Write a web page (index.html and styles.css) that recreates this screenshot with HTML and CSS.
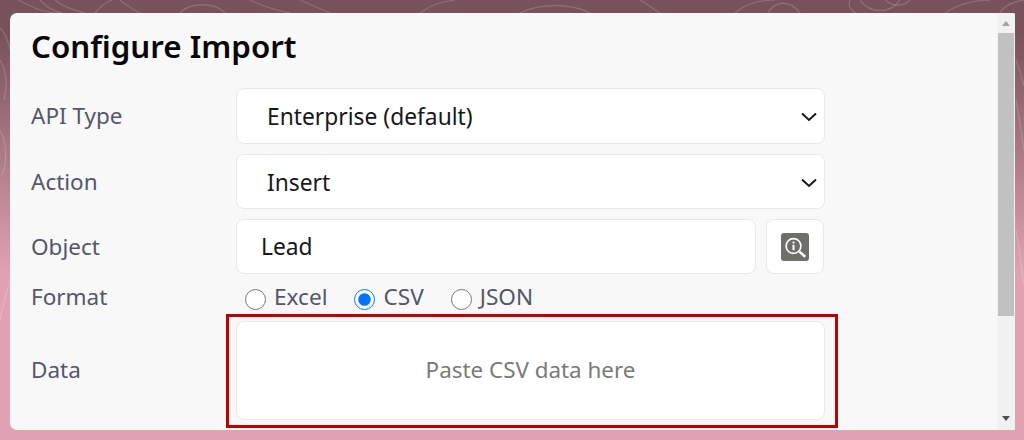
FILE: index.html
```html
<!DOCTYPE html>
<html lang="en">
<head>
    <meta charset="UTF-8">
    <title>Configure Import</title>
    <link rel="stylesheet" href="styles.css">
</head>
<body>
    <!-- contour lines behind the panel -->
    <svg class="contours" viewBox="0 0 1024 440" fill="none" stroke="#fff" stroke-opacity="0.16" stroke-width="1.3">
        <path d="M18 0C34 8 44 13 60 13"/>
        <path d="M40 0C46 6 50 10 62 13"/>
        <path d="M55 0C62 6 72 10 85 13"/>
        <path d="M95 13C100 7 104 3 112 0"/>
        <path d="M120 0C125 5 135 10 140 13"/>
        <path d="M180 13C190 2 215 2 225 13"/>
        <path d="M250 0C262 6 275 10 290 13"/>
        <path d="M300 0C312 5 320 9 330 13"/>
        <path d="M420 13C430 5 440 2 455 0"/>
        <path d="M520 13C540 3 570 3 590 13"/>
        <path d="M640 0C650 6 655 10 660 13"/>
        <path d="M735 13C745 4 760 0 775 0"/>
        <path d="M768 13C775 0 790 0 800 13"/>
        <path d="M850 0C848 5 850 10 856 13"/>
        <path d="M860 0C870 14 890 14 900 0"/>
        <path d="M885 0C893 7 903 7 910 0"/>
        <path d="M945 13C960 3 975 0 990 0"/>
        <path d="M1000 13C1004 6 1012 2 1024 0"/>
        <path d="M0 28C6 34 9 44 10 50"/>
        <path d="M0 60C6 70 8 85 4 100"/>
        <path d="M0 130C6 140 8 160 2 175"/>
        <path d="M0 320C4 300 7 290 10 280"/>
        <path d="M1016 60C1020 70 1022 80 1024 86"/>
        <path d="M1016 100C1020 120 1022 140 1024 150"/>
        <path d="M1016 230C1020 250 1021 270 1024 285"/>
    </svg>

    <main class="panel">
        <div class="content">
            <h1>Configure Import</h1>

            <div class="row">
                <label class="field-label" for="apiType">API Type</label>
                <div class="select-wrap">
                    <select id="apiType">
                        <option>Enterprise (default)</option>
                        <option>Bulk</option>
                    </select>
                    <svg class="chevron" viewBox="0 0 16 10" fill="none" stroke="#181818" stroke-width="2"><path d="M1 1.5l7 6.5 7-6.5"/></svg>
                </div>
            </div>

            <div class="row">
                <label class="field-label" for="action">Action</label>
                <div class="select-wrap">
                    <select id="action">
                        <option>Insert</option>
                        <option>Update</option>
                    </select>
                    <svg class="chevron" viewBox="0 0 16 10" fill="none" stroke="#181818" stroke-width="2"><path d="M1 1.5l7 6.5 7-6.5"/></svg>
                </div>
            </div>

            <div class="row object-row">
                <label class="field-label" for="object">Object</label>
                <div class="object-wrap">
                    <input id="object" type="text" value="Lead">
                    <button class="info-btn" type="button" aria-label="Object info">
                        <svg viewBox="0 0 28 28" width="28" height="28">
                            <rect width="28" height="28" rx="3" fill="#706e6b"/>
                            <circle cx="12.5" cy="13" r="7.4" fill="none" stroke="#fff" stroke-width="1.7"/>
                            <circle cx="12.5" cy="9.6" r="1.1" fill="#fff"/>
                            <rect x="11.5" y="11.8" width="2" height="5.4" fill="#fff"/>
                            <path d="M18.2 18.4l6 5.4" stroke="#fff" stroke-width="2.6"/>
                        </svg>
                    </button>
                </div>
            </div>

            <div class="row format-row">
                <span class="field-label">Format</span>
                <div class="radios">
                    <label><input type="radio" name="format">Excel</label>
                    <label><input type="radio" name="format" checked>CSV</label>
                    <label><input type="radio" name="format">JSON</label>
                </div>
            </div>

            <div class="row data-row">
                <label class="field-label" for="data">Data</label>
                <div class="data-wrap">
                    <textarea id="data" placeholder="Paste CSV data here"></textarea>
                    <div class="highlight"></div>
                </div>
            </div>
        </div>

        <div class="scrollbar">
            <span class="arrow-up"></span>
            <div class="thumb"></div>
            <span class="arrow-down"></span>
        </div>
    </main>
</body>
</html>
```

FILE: styles.css
```css
* {
    margin: 0;
    padding: 0;
    box-sizing: border-box;
}
html, body {
    height: 100%;
    overflow: hidden;
}
body {
    position: relative;
    font-family: "Noto Sans", sans-serif;
    background: linear-gradient(180deg, #78525a 0%, #78525a 8%, #e0a2b3 62%, #e0a2b3 100%);
    padding: 13px 9px 10px 10px;
}
.contours {
    position: absolute;
    top: 0;
    left: 0;
    width: 1024px;
    height: 440px;
}
.panel {
    position: relative;
    display: flex;
    height: 417px;
    background-color: #f8f8f8;
    border-radius: 7px 2px 2px 7px;
    overflow: hidden;
}
.content {
    flex: 1;
    padding: 11px 0 0 21px;
}
h1 {
    font-size: 31.3px;
    line-height: 44px;
    font-weight: 600;
    color: #080707;
    margin-bottom: 20px;
}
.row {
    display: flex;
    align-items: center;
    height: 55.5px;
    margin-bottom: 10px;
}
.object-row {
    height: 55px;
}
.field-label {
    width: 205px;
    font-size: 22.5px;
    color: #54566a;
}
.select-wrap {
    position: relative;
    width: 589px;
    height: 100%;
}
select, #object {
    width: 100%;
    height: 100%;
    background-color: white;
    border: 1px solid #e8e8e8;
    border-radius: 8px;
    font-family: inherit;
    font-size: 22.8px;
    color: #181818;
    appearance: none;
    outline: none;
}
select {
    padding-top: 2px;
    padding-left: 30px;
}
.chevron {
    position: absolute;
    top: 24px;
    right: 8px;
    width: 16px;
    height: 10px;
}
.object-wrap {
    display: flex;
    gap: 10px;
    width: 588px;
    height: 100%;
}
#object {
    flex: 1;
    padding-left: 24px;
    min-width: 0;
}
.info-btn {
    display: flex;
    justify-content: center;
    align-items: center;
    width: 58px;
    background-color: white;
    border: 1px solid #e8e8e8;
    border-radius: 8px;
}
.format-row {
    height: 25px;
    margin-top: 11px;
    margin-bottom: 11px;
}
.format-row .field-label, .data-row .field-label {
    padding-bottom: 2px;
}
.radios {
    display: flex;
    gap: 27px;
    padding-left: 9px;
    font-size: 22.6px;
    color: #54566a;
}
.radios label {
    display: flex;
    align-items: center;
    gap: 8px;
    padding-bottom: 2px;
}
.radios input {
    width: 21px;
    height: 21px;
    margin-top: 6px;
    accent-color: #0075ff;
}
.data-row {
    height: 99px;
    margin: 0;
}
.data-wrap {
    position: relative;
    width: 589px;
    height: 100%;
}
textarea {
    display: block;
    width: 100%;
    height: 100%;
    padding-top: 32px;
    background-color: white;
    border: 1px solid #e8e8e8;
    border-radius: 8px;
    font-family: inherit;
    font-size: 22.4px;
    text-align: center;
    resize: none;
    outline: none;
}
textarea::placeholder {
    color: #7a7a76;
    opacity: 1;
}
/* red annotation box drawn over the textarea */
.highlight {
    position: absolute;
    top: -7px;
    left: -10px;
    right: -13px;
    bottom: -8px;
    border: 3px solid #c00000;
    pointer-events: none;
}
.scrollbar {
    display: flex;
    flex-direction: column;
    align-items: center;
    width: 18px;
    padding: 0 1px;
    background-color: #f1f1f1;
}
.arrow-up, .arrow-down {
    width: 0;
    height: 0;
    border-left: 4px solid transparent;
    border-right: 4px solid transparent;
}
.arrow-up {
    margin-top: 8px;
    border-bottom: 5px solid #a3a3a3;
}
.arrow-down {
    margin-top: 100px;
    border-top: 5px solid #505050;
}
.thumb {
    width: 16px;
    height: 283px;
    margin-top: 7px;
    background-color: #c1c1c1;
}
```
